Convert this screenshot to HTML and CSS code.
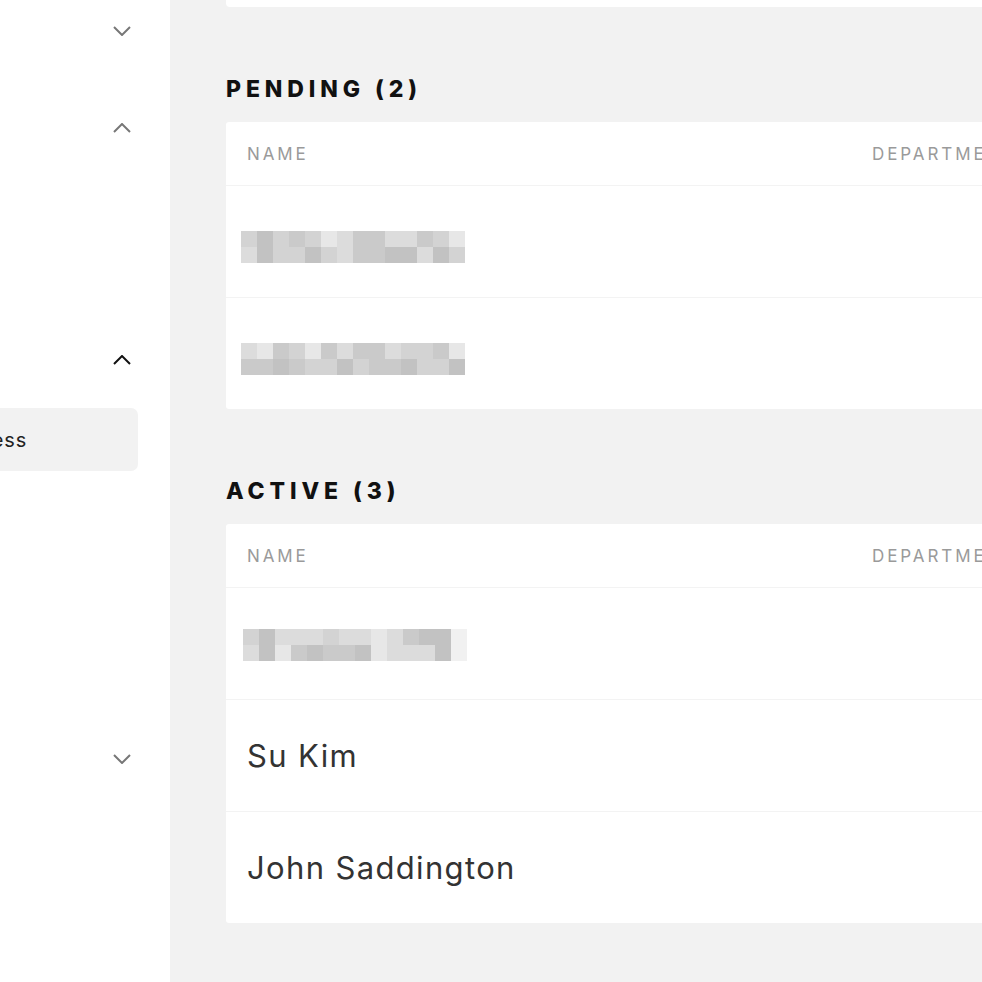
FILE: index.html
```html
<!DOCTYPE html>
<html lang="en">
<head>
<meta charset="utf-8">
<title>Members</title>
<link rel="stylesheet" href="styles.css">
</head>
<body>
<div class="app">
  <aside class="sidebar">
    <div class="toggle t1"><svg class="chev" viewBox="0 0 18 10"><path d="M1 1l8 8 8-8"/></svg></div>
    <div class="toggle t2"><svg class="chev" viewBox="0 0 18 10"><path d="M1 9l8-8 8 8"/></svg></div>
    <div class="toggle t3 dark"><svg class="chev" viewBox="0 0 18 10"><path d="M1 9l8-8 8 8"/></svg></div>
    <div class="nav-item active"><div class="nav-label"><span>Access</span></div></div>
    <div class="toggle t4"><svg class="chev" viewBox="0 0 18 10"><path d="M1 1l8 8 8-8"/></svg></div>
  </aside>
  <main class="main">
    <div class="card top-card"></div>

    <h2 class="section-title">PENDING (2)</h2>
    <div class="card">
      <div class="row head"><div class="col">NAME</div><div class="col">DEPARTMENT</div></div>
      <div class="row">
        <div class="pix">
          <span class="s3"></span><span class="s1"></span><span class="s3"></span><span class="s2"></span><span class="s3"></span><span class="s5"></span><span class="s4"></span><span class="s2"></span><span class="s2"></span><span class="s4"></span><span class="s4"></span><span class="s2"></span><span class="s3"></span><span class="s5"></span>
          <span class="s4"></span><span class="s1"></span><span class="s3"></span><span class="s3"></span><span class="s1"></span><span class="s3"></span><span class="s4"></span><span class="s2"></span><span class="s2"></span><span class="s1"></span><span class="s1"></span><span class="s4"></span><span class="s1"></span><span class="s3"></span>
        </div>
      </div>
      <div class="row">
        <div class="pix">
          <span class="s4"></span><span class="s5"></span><span class="s2"></span><span class="s3"></span><span class="s5"></span><span class="s2"></span><span class="s4"></span><span class="s2"></span><span class="s2"></span><span class="s4"></span><span class="s3"></span><span class="s3"></span><span class="s2"></span><span class="s5"></span>
          <span class="s2"></span><span class="s2"></span><span class="s1"></span><span class="s2"></span><span class="s3"></span><span class="s3"></span><span class="s1"></span><span class="s3"></span><span class="s2"></span><span class="s2"></span><span class="s1"></span><span class="s3"></span><span class="s3"></span><span class="s1"></span>
        </div>
      </div>
    </div>

    <h2 class="section-title">ACTIVE (3)</h2>
    <div class="card">
      <div class="row head"><div class="col">NAME</div><div class="col">DEPARTMENT</div></div>
      <div class="row">
        <div class="pix shifted">
          <span class="s3"></span><span class="s1"></span><span class="s4"></span><span class="s4"></span><span class="s4"></span><span class="s3"></span><span class="s4"></span><span class="s4"></span><span class="s5"></span><span class="s4"></span><span class="s2"></span><span class="s1"></span><span class="s1"></span><span class="s6"></span>
          <span class="s4"></span><span class="s1"></span><span class="s5"></span><span class="s2"></span><span class="s1"></span><span class="s2"></span><span class="s2"></span><span class="s1"></span><span class="s5"></span><span class="s4"></span><span class="s4"></span><span class="s4"></span><span class="s1"></span><span class="s6"></span>
        </div>
      </div>
      <div class="row"><div class="name">Su Kim</div></div>
      <div class="row"><div class="name">John Saddington</div></div>
    </div>
  </main>
</div>
</body>
</html>
```

FILE: styles.css
```css
* { box-sizing: border-box; }
html, body { margin: 0; height: 100%; }
body {
  font-family: Inter, "Noto Sans", sans-serif;
  color: #333;
  background: #f2f2f2;
}
.app {
  display: flex;
  height: 982px;
  overflow: hidden;
}
.sidebar {
  width: 170px;
  flex: none;
  background: #fff;
  display: flex;
  flex-direction: column;
}
.toggle {
  height: 62px;
  display: flex;
  align-items: center;
  justify-content: flex-end;
  padding-right: 39px;
}
.t2 { margin-top: 35px; }
.t3 { margin-top: 170px; }
.t4 { margin-top: 257px; }
.chev {
  width: 18px;
  height: 10px;
  fill: none;
  stroke: #777;
  stroke-width: 2;
}
.dark .chev { stroke: #111; }
.nav-item {
  margin-top: 17px;
  width: 138px;
  height: 63px;
  display: flex;
  align-items: center;
}
.nav-item.active {
  background: #f2f2f2;
  border-radius: 0 7px 7px 0;
}
.nav-label {
  width: 27px;
  display: flex;
  justify-content: flex-end;
  overflow: hidden;
  white-space: nowrap;
  font-size: 20px;
  letter-spacing: 0.8px;
  color: #222;
}
.nav-label span { flex: none; }
.main {
  flex: 1;
  min-width: 0;
  overflow: hidden;
  background: #f2f2f2;
  padding-left: 56px;
}
.card {
  width: 900px;
  background: #fff;
  border-radius: 3px;
}
.top-card {
  height: 7px;
  border-radius: 0 0 4px 4px;
}
.section-title {
  margin: 68px 0 19px;
  height: 28px;
  line-height: 28px;
  font-size: 23px;
  font-weight: 800;
  letter-spacing: 4.9px;
  color: #111;
}
.row {
  height: 112px;
  display: grid;
  grid-template-columns: 625px 1fr;
  align-items: center;
  padding-left: 21px;
  border-top: 1px solid #f3f3f3;
}
.row.head {
  height: 63px;
  border-top: 0;
  font-size: 17px;
  letter-spacing: 2.9px;
  color: #9a9a9a;
}
.name {
  font-size: 31px;
  letter-spacing: 1.35px;
  color: #333;
}
.pix {
  display: grid;
  grid-template-columns: repeat(14, 16px);
  grid-auto-rows: 16px;
  margin-left: -6px;
  margin-top: 10px;
}
.pix.shifted { margin-left: -4px; margin-top: 2px; }
.s1 { background: #c2c2c2; }
.s2 { background: #cacaca; }
.s3 { background: #d3d3d3; }
.s4 { background: #dcdcdc; }
.s5 { background: #e7e7e7; }
.s6 { background: #f1f1f1; }
```
